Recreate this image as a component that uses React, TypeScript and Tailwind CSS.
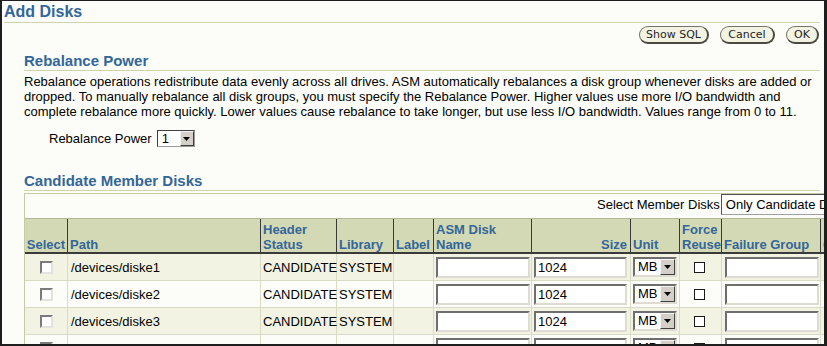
import React from "react";

const cols = "grid-cols-[43px_193px_76px_57px_40px_98px_99px_49px_42px_99px_80px]";

function Tri() {
  return (
    <svg width="7" height="4" viewBox="0 0 7 4">
      <path d="M0 0h7L3.5 4z" fill="#000" />
    </svg>
  );
}

function DropBtn({ w, h }: { w: string; h: string }) {
  return (
    <div
      className={`${w} ${h} bg-[#d4d0c8] border border-t-[#f4f4f4] border-l-[#f4f4f4] border-b-[#404040] border-r-[#404040] flex items-center justify-center`}
    >
      <Tri />
    </div>
  );
}

function TextBox({ w, value }: { w: string; value?: string }) {
  return (
    <div
      className={`${w} h-[21px] bg-white border-2 border-t-[#6e6e6e] border-l-[#6e6e6e] border-b-[#dedbd3] border-r-[#dedbd3] text-[13px] leading-[17px] pl-[2px] text-black`}
    >
      {value}
    </div>
  );
}

function WinCheck() {
  return (
    <div className="w-[13px] h-[13px] bg-white border-2 border-t-[#7b7b7b] border-l-[#7b7b7b] border-b-[#e4e2dc] border-r-[#e4e2dc]" />
  );
}

function Button({ label, w }: { label: string; w: string }) {
  return (
    <div
      className={`${w} h-[18px] rounded-full bg-[#f3f3e4] border border-[#74746a] border-b-2 border-r-2 border-b-[#4a4a40] border-r-[#4a4a40] flex items-center justify-center font-['DejaVu_Sans',sans-serif] text-[11px] leading-[14px] text-[#1e1e1e]`}
    >
      {label}
    </div>
  );
}

const headers: { lines: string[]; right?: boolean; center?: boolean }[] = [
  { lines: ["Select"], center: true },
  { lines: ["Path"] },
  { lines: ["Header", "Status"] },
  { lines: ["Library"] },
  { lines: ["Label"] },
  { lines: ["ASM Disk", "Name"] },
  { lines: ["Size"], right: true },
  { lines: ["Unit"] },
  { lines: ["Force", "Reuse"] },
  { lines: ["Failure Group"] },
  { lines: ["Quorum"] },
];

const rows = ["/devices/diske1", "/devices/diske2", "/devices/diske3", "/devices/diske4"];

export default function App() {
  return (
    <div className="w-[827px] h-[346px] bg-[#1e1e1e] pl-[2px] pt-[1px] pr-[3px] pb-[2px] overflow-hidden">
      <div className="w-[822px] h-[343px] bg-[#fcfdf9] overflow-hidden font-['Liberation_Sans',Arial,sans-serif] text-black">
        {/* Title */}
        <div className="ml-[2px] mr-[4px] pt-[1px] border-b border-[#cfd4a8]">
          <h1 className="text-[16px] leading-[20px] font-bold text-[#336699]">Add Disks</h1>
        </div>

        {/* Buttons */}
        <div className="mt-[3px] mr-[5px] flex justify-end gap-[11px]">
          <Button label="Show SQL" w="w-[70px]" />
          <Button label="Cancel" w="w-[55px]" />
          <Button label="OK" w="w-[33px]" />
        </div>

        {/* Rebalance Power */}
        <div className="ml-[22px] mr-[4px] mt-[8px]">
          <h2 className="text-[15px] leading-[18px] font-bold text-[#336699] border-b border-[#cfd4a8]">
            Rebalance Power
          </h2>
          <p className="mt-[3px] text-[13px] leading-[15px]">
            Rebalance operations redistribute data evenly across all drives. ASM automatically rebalances a disk group whenever disks are added or
            <br />
            dropped. To manually rebalance all disk groups, you must specify the Rebalance Power. Higher values use more I/O bandwidth and
            <br />
            complete rebalance more quickly. Lower values cause rebalance to take longer, but use less I/O bandwidth. Values range from 0 to 11.
          </p>
          <div className="mt-[11px] h-[17px] flex items-center pl-[25px] gap-[5px]">
            <span className="text-[13px] leading-[15px]">Rebalance Power</span>
            <div className="w-[38px] h-[17px] bg-white border border-t-[#404040] border-l-[#404040] border-b-[#9a9a9a] border-r-[#9a9a9a] flex">
              <span className="flex-1 text-[13px] leading-[15px] pl-[4px]">1</span>
              <DropBtn w="w-[14px]" h="h-[15px]" />
            </div>
          </div>

          {/* Candidate Member Disks */}
          <h2 className="mt-[25px] text-[15px] leading-[18px] font-bold text-[#336699] border-b border-[#cfd4a8]">
            Candidate Member Disks
          </h2>
        </div>

        {/* Table */}
        <div className="ml-[22px] mt-[2px] w-[877px] border-l border-t border-[#c6caa6]">
          <div className="h-[25px] border-b border-[#b4b898] flex items-start bg-[#fcfdf9]">
            <span className="ml-[572px] h-[21px] text-[13px] leading-[21px] whitespace-nowrap">Select Member Disks</span>
            <div className="ml-[1px] w-[160px] h-[21px] bg-white border border-[#505050] border-b-[#a0a0a0] border-r-[#a0a0a0] text-[13px] leading-[19px] pl-[4px] whitespace-nowrap">
              Only Candidate Disks
            </div>
          </div>

          <div className={`grid ${cols} bg-[#d4d9b5] border-b-2 border-[#3a3a3a]`}>
            {headers.map((h, i) => (
              <div
                key={i}
                className={`h-[33px] border-r border-[#3a3a3a] px-[2px] flex flex-col justify-end text-[13px] leading-[15px] font-bold text-[#336699] whitespace-nowrap ${
                  h.right ? "items-end pr-[3px]" : h.center ? "items-center" : "items-start"
                }`}
              >
                {h.lines.map((l) => (
                  <span key={l}>{l}</span>
                ))}
              </div>
            ))}
          </div>

          {rows.map((path, r) => (
            <div key={path} className={`grid ${cols} ${r % 2 === 0 ? "bg-[#f2f3e3]" : "bg-[#fcfdf8]"} text-[13px] leading-[15px]`}>
              <div className="h-[27px] border-r border-b border-[#d9dcc4] flex items-center justify-center">
                <WinCheck />
              </div>
              <div className="h-[27px] border-r border-b border-[#d9dcc4] flex items-center pl-[3px]">{path}</div>
              <div className="h-[27px] border-r border-b border-[#d9dcc4] flex items-center pl-[2px]">CANDIDATE</div>
              <div className="h-[27px] border-r border-b border-[#d9dcc4] flex items-center pl-[2px]">SYSTEM</div>
              <div className="h-[27px] border-r border-b border-[#d9dcc4]" />
              <div className="h-[27px] border-r border-b border-[#d9dcc4] flex items-center pl-[2px]">
                <TextBox w="w-[94px]" />
              </div>
              <div className="h-[27px] border-r border-b border-[#d9dcc4] flex items-center pl-[2px]">
                <TextBox w="w-[93px]" value="1024" />
              </div>
              <div className="h-[27px] border-r border-b border-[#d9dcc4] flex items-center pl-[2px]">
                <div className="w-[44px] h-[20px] bg-white border-2 border-t-[#6e6e6e] border-l-[#6e6e6e] border-b-[#dedbd3] border-r-[#dedbd3] flex">
                  <span className="flex-1 text-[13px] leading-[16px] pl-[3px]">MB</span>
                  <DropBtn w="w-[15px]" h="h-[16px]" />
                </div>
              </div>
              <div className="h-[27px] border-r border-b border-[#d9dcc4] flex items-center pl-[14px]">
                <div className="w-[11px] h-[11px] bg-white border border-[#1a1a1a]" />
              </div>
              <div className="h-[27px] border-r border-b border-[#d9dcc4] flex items-center pl-[3px]">
                <TextBox w="w-[94px]" />
              </div>
              <div className="h-[27px] border-r border-b border-[#d9dcc4]" />
            </div>
          ))}
        </div>
      </div>
    </div>
  );
}
